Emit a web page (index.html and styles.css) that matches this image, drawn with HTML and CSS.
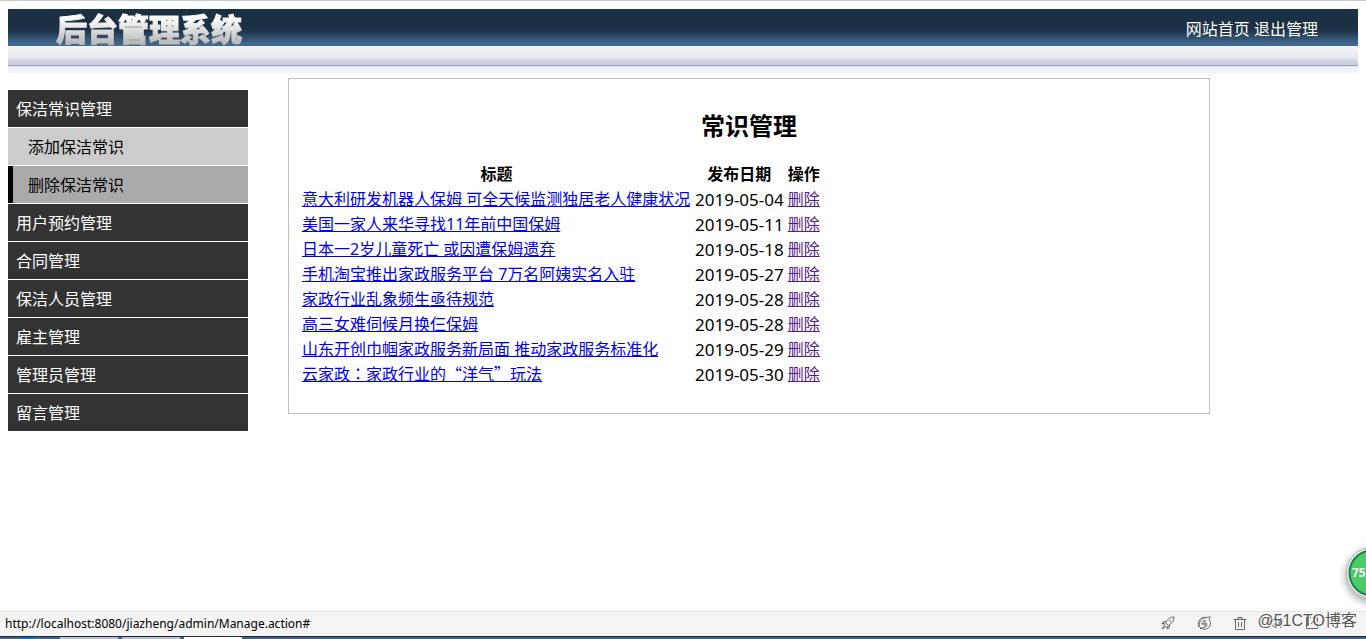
FILE: index.html
```html
<!DOCTYPE html>
<html lang="zh-CN">
<head>
<meta charset="utf-8">
<title>后台管理系统</title>
<link rel="stylesheet" href="styles.css">
</head>
<body>
<header class="header">
  <div class="header-main">
    <h1 class="logo">后台管理系统</h1>
    <nav class="top-links"><a href="#">网站首页</a> <a href="#">退出管理</a></nav>
  </div>
  <div class="header-strip"></div>
</header>
<div class="layout">
  <nav class="sidebar">
    <a class="menu" href="#">保洁常识管理</a>
    <a class="submenu" href="#">添加保洁常识</a>
    <a class="submenu active" href="#">删除保洁常识</a>
    <a class="menu" href="#">用户预约管理</a>
    <a class="menu" href="#">合同管理</a>
    <a class="menu" href="#">保洁人员管理</a>
    <a class="menu" href="#">雇主管理</a>
    <a class="menu" href="#">管理员管理</a>
    <a class="menu" href="#">留言管理</a>
  </nav>
  <main class="panel">
    <h2 class="title">常识管理</h2>
    <table class="articles">
      <thead><tr><th class="name">标题</th><th>发布日期</th><th>操作</th></tr></thead>
      <tbody>
        <tr><td><a href="#">意大利研发机器人保姆 可全天候监测独居老人健康状况</a></td><td class="date">2019-05-04</td><td><a class="visited" href="#">删除</a></td></tr>
        <tr><td><a href="#">美国一家人来华寻找11年前中国保姆</a></td><td class="date">2019-05-11</td><td><a class="visited" href="#">删除</a></td></tr>
        <tr><td><a href="#">日本一2岁儿童死亡 或因遭保姆遗弃</a></td><td class="date">2019-05-18</td><td><a class="visited" href="#">删除</a></td></tr>
        <tr><td><a href="#">手机淘宝推出家政服务平台 7万名阿姨实名入驻</a></td><td class="date">2019-05-27</td><td><a class="visited" href="#">删除</a></td></tr>
        <tr><td><a href="#">家政行业乱象频生亟待规范</a></td><td class="date">2019-05-28</td><td><a class="visited" href="#">删除</a></td></tr>
        <tr><td><a href="#">高三女难伺候月换仨保姆</a></td><td class="date">2019-05-28</td><td><a class="visited" href="#">删除</a></td></tr>
        <tr><td><a href="#">山东开创巾帼家政服务新局面 推动家政服务标准化</a></td><td class="date">2019-05-29</td><td><a class="visited" href="#">删除</a></td></tr>
        <tr><td><a class="wide-quotes" href="#">云家政<span class="mid-colon" lang="zh-TW">：</span>家政行业的“洋气”玩法</a></td><td class="date">2019-05-30</td><td><a class="visited" href="#">删除</a></td></tr>
      </tbody>
    </table>
  </main>
</div>
<div class="gauge">75</div>
<footer class="browser-foot">
  <div class="status">
    <span class="url">http://localhost:8080/jiazheng/admin/Manage.action#</span>
    <div class="tools">
      <svg viewBox="0 0 14 14"><path d="M13 1C9 1 7 3 4.500 6.500L7.500 9.500C11 7 13 5 13 1ZM5 5.500L2 6L1 8L4 7M8.500 9L8 12L6 13L7 10M4 8L1 13L6 10M8 4L10 6"/></svg>
      <svg viewBox="0 0 14 14"><path d="M12.500 4A6 6 0 1 1 9 1.500M1.500 11C2 5 6 1 13 1C13 2 12.500 3 12 4M3 12.500C7 12 9 11 10 9M8 4L4.500 8H10.500M8 4V10.500"/></svg>
      <svg viewBox="0 0 14 14"><path d="M1 3.500H13M5 3V1.500H9V3M2.500 4V13.500H11.500V4M5.500 6V11M8.500 6V11"/></svg>
      <svg viewBox="0 0 14 14"><path d="M1 5H3L7 2V12L3 9H1ZM9 4Q12 7 9 10M11 2Q16 7 11 12"/></svg>
      <svg viewBox="0 0 14 14"><path d="M6 1.500H1.500V12.500H12.500V8M8 1.500H12.500V6M12 2L6 8"/></svg>
    </div>
    <span class="watermark">@51CTO博客</span>
  </div>
  <div class="taskbar"><i class="orb"></i><i class="task"></i><i class="task"></i><i class="task current"></i></div>
</footer>
</body>
</html>
```

FILE: styles.css
```css
* { box-sizing: border-box; }

body {
  margin: 0;
  padding: 8px;
  min-height: 100vh;
  border-top: 1px solid #c8cccb;
  background: #fff;
  color: #000;
  font: 16px/21px "Noto Sans", "Noto Sans CJK SC", sans-serif;
}

.header-main {
  display: flex;
  align-items: center;
  justify-content: space-between;
  height: 37px;
  padding: 0 40px 0 48px;
  background: linear-gradient(#1b3042 0 55%, #416990 95%, #416990);
}

.logo {
  margin: 0;
  padding-top: 3px;
  font-size: 31px;
  line-height: 34px;
  font-weight: 900;
  color: transparent;
  background: linear-gradient(#fff 25%, #bbb 90%);
  background-clip: text;
  -webkit-text-stroke: 1px transparent;
}

.top-links { color: #fff; padding-top: 4px; }
.top-links a { color: #fff; text-decoration: none; }

.header-strip {
  height: 27px;
  background: linear-gradient(#f4f4f4, #e7e9ee 11px, #dce4ee 13px, #cdd4e0 15px, #cdd4e0 19px, #93a0b3 19px 20px, #dfe7f1 20px 21px, #edf2fb 21px);
}

.layout {
  display: flex;
  align-items: flex-start;
  gap: 40px;
  padding-top: 5px;
}

.sidebar {
  flex: 0 0 240px;
  display: flex;
  flex-direction: column;
  gap: 1px;
  margin-top: 12px;
}

.menu,
.submenu {
  padding: 9px 8px 7px;
  text-decoration: none;
  color: #fff;
  background: #333;
}

.submenu { padding-left: 20px; color: #000; background: #ccc; }
.submenu.active { padding-left: 15px; border-left: 5px solid #000; background: #aaa; }

.panel {
  flex: 1;
  margin-right: 148px;
  padding: 30px 10px 25px;
  border: 1px solid #c0c0c0;
}

.title {
  margin: 0 0 18px;
  font-size: 24px;
  line-height: 34px;
  text-align: center;
}

.articles { border-spacing: 2px; white-space: nowrap; }
.articles th,
.articles td { padding: 1px; }
.articles .name { min-width: 391px; }
.articles a { color: #00e; }
.articles .visited { color: #551a8b; }
.articles .date { padding: 0 1px; font-size: 17px; }
.wide-quotes,
.mid-colon { line-height: 16px; }
.wide-quotes { font-family: "Noto Sans CJK SC", sans-serif; }
.mid-colon { font-family: "Noto Sans CJK TC", sans-serif; }

.gauge {
  position: fixed;
  right: -32px;
  bottom: 40px;
  width: 52px;
  height: 52px;
  padding-left: 5px;
  border: 1px solid #aaa;
  border-radius: 50%;
  background: radial-gradient(circle at 50% 50%, #49cb66 0 21px, #168052 22px 23px, #eee 24px);
  box-shadow: 0 3px 8px #999;
  color: #fff;
  font: bold 12px/50px "Noto Sans", sans-serif;
}

.browser-foot { position: fixed; left: 0; right: 0; bottom: 0; }

.status {
  display: flex;
  align-items: center;
  justify-content: space-between;
  height: 25px;
  padding: 0 47px 2px 5px;
  border-top: 1px solid #e5e5e5;
  background: #f4f4f4;
}

.url { font-size: 12px; }
.tools { display: flex; gap: 22px; }
.tools svg { width: 14px; height: 14px; fill: none; stroke: #666; stroke-width: 1; }

.watermark {
  position: absolute;
  right: 9px;
  top: 0;
  font: 16px/20px "Liberation Sans", "Noto Sans CJK SC", sans-serif;
  color: #555;
  text-shadow: 1px 1px #fff;
}

.taskbar {
  display: flex;
  gap: 4px;
  height: 3px;
  padding-left: 20px;
  border-top: 1px solid #17283c;
  background: #49627e;
}
.orb { width: 14px; margin-right: 22px; background: #1a6aa8; }
.task { width: 58px; background: #bbc0c8; }
.current { background: #fff; }
```
